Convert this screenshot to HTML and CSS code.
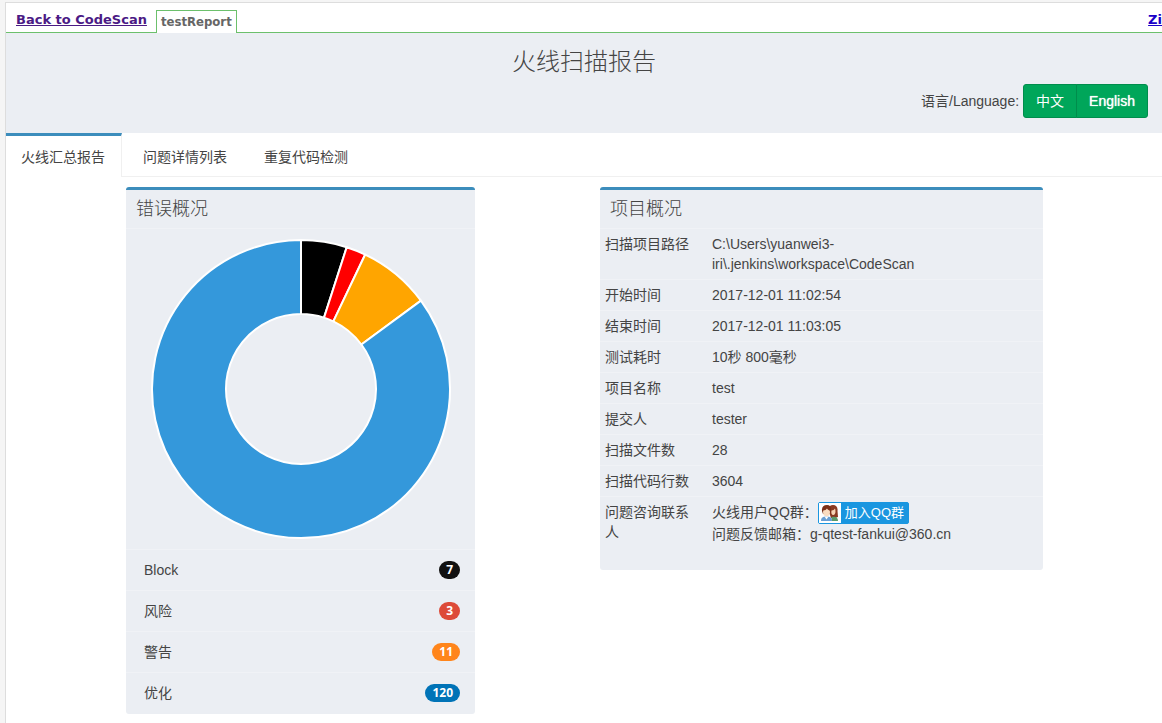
FILE: index.html
```html
<!DOCTYPE html>
<html lang="zh-CN">
<head>
<meta charset="utf-8">
<meta name="viewport" content="width=device-width, initial-scale=1">
<title>火线扫描报告</title>
<link rel="stylesheet" href="styles.css">
</head>
<body>
<div class="frame">
  <nav class="topbar">
    <a class="back" href="#back">Back to CodeScan</a>
    <span class="report-tab">testReport</span>
    <a class="zip" href="#zip">Zi</a>
  </nav>

  <header class="banner">
    <h1 class="title">火线扫描报告</h1>
    <div class="language">
      <span>语言/Language:</span>
      <div class="btn-group">
        <button class="btn" type="button">中文</button>
        <button class="btn btn-en" type="button">English</button>
      </div>
    </div>
  </header>

  <nav class="tabs">
    <a class="tab active" href="#summary">火线汇总报告</a>
    <a class="tab" href="#details">问题详情列表</a>
    <a class="tab" href="#duplicates">重复代码检测</a>
  </nav>

  <main class="content">
    <section class="box errors">
      <h2 class="box-title">错误概况</h2>
      <div class="chart">
        <svg class="donut" viewBox="0 0 302 302" role="img" aria-label="错误概况">
          <g transform="translate(151 151)" stroke="#fff" stroke-width="2" stroke-linejoin="round">
            <path fill="#000" d="M0-149A149 149 0 0 1 45.73-141.82L23.02-71.39A75 75 0 0 0 0-75Z"/>
            <path fill="#f00" d="M45.73-141.82A149 149 0 0 1 64.22-134.46L32.33-67.68A75 75 0 0 0 23.02-71.39Z"/>
            <path fill="#ffa500" d="M64.22-134.46A149 149 0 0 1 119.96-88.37L60.38-44.48A75 75 0 0 0 32.33-67.68Z"/>
            <path fill="#3498db" d="M119.96-88.37A149 149 0 1 1 0-149L0-75A75 75 0 1 0 60.38-44.48Z"/>
          </g>
        </svg>
      </div>
      <ul class="counts">
        <li><span>Block</span><span class="badge black">7</span></li>
        <li><span>风险</span><span class="badge red">3</span></li>
        <li><span>警告</span><span class="badge orange">11</span></li>
        <li><span>优化</span><span class="badge blue">120</span></li>
      </ul>
    </section>

    <section class="box project">
      <h2 class="box-title">项目概况</h2>
      <table class="info">
        <tbody>
          <tr><th scope="row">扫描项目路径</th><td>C:\Users\yuanwei3-<br>iri\.jenkins\workspace\CodeScan</td></tr>
          <tr><th scope="row">开始时间</th><td>2017-12-01 11:02:54</td></tr>
          <tr><th scope="row">结束时间</th><td>2017-12-01 11:03:05</td></tr>
          <tr><th scope="row">测试耗时</th><td>10秒 800毫秒</td></tr>
          <tr><th scope="row">项目名称</th><td>test</td></tr>
          <tr><th scope="row">提交人</th><td>tester</td></tr>
          <tr><th scope="row">扫描文件数</th><td>28</td></tr>
          <tr><th scope="row">扫描代码行数</th><td>3604</td></tr>
          <tr>
            <th scope="row">问题咨询联系人</th>
            <td>
              <div class="contact">
                <span>火线用户QQ群：</span>
                <a class="qq" href="#qq">
                  <svg class="qq-icon" viewBox="0 0 22 20" aria-hidden="true">
                    <path fill="#fff" d="M0 0h22v20H0z"/>
                    <path fill="#8a3a22" d="M10 9c-1-5 1-7 4-7s5 2 4.500 6l.5 6-3 1h-4z"/>
                    <path fill="#f8d3b4" d="M12.500 7.500c2 0 2.500-1 3.500-2 1 3 .5 6-1.500 6.500-2 0-2.500-2-2-4.500z"/>
                    <path fill="#5b9b6a" d="M12.500 14c4-1 6.500 0 6.500 4h-6.500z"/>
                    <path fill="#7b3018" d="M3 8c-.5-4 1.500-6 5-6s4.500 2.500 4 6l-1 3H4z"/>
                    <ellipse cx="7.500" cy="9" rx="3.500" ry="4.200" fill="#fbdcc0"/>
                    <path fill="#7b3018" d="M3.500 7.500c3 0 3.500-1 4.500-2 1 1.500 2 2 3.500 2L10.500 3.500H5z"/>
                    <path fill="#6a9fd4" d="M2 18c0-3.500 2-4.500 5.500-4.500s5.500 1 5.500 4.500z"/>
                    <path fill="#fff" d="M5.500 13.500l2 3 2-3z"/>
                  </svg>
                  <span class="qq-text">加入QQ群</span>
                </a>
              </div>
              <div>问题反馈邮箱：g-qtest-fankui@360.cn</div>
            </td>
          </tr>
        </tbody>
      </table>
    </section>
  </main>
</div>
</body>
</html>
```
FILE: styles.css
```css
* {
  box-sizing: border-box;
}

body {
  margin: 0;
  padding: 2px 0 0 5px;
  background: #f5f5f5;
  color: #444;
  font: 14px/20px "Liberation Sans", "Noto Sans CJK SC", sans-serif;
}

.frame {
  min-height: calc(100vh - 2px);
  border-top: 1px solid #ddd;
  border-left: 1px solid #ddd;
  background: #fff;
}

.topbar {
  display: flex;
  align-items: flex-end;
  height: 30px;
  padding-left: 10px;
  border-bottom: 1px solid #6cc06c;
  font: bold 13px/16px "DejaVu Sans", sans-serif;
}

.back {
  margin: 0 9px 4px 0;
  color: #4b1a85;
}

.report-tab {
  margin-bottom: -1px;
  padding: 2px 4px 3px;
  border: 1px solid #6cc06c;
  border-bottom: 0;
  background: #fff;
  color: #666;
  font-family: "DejaVu Sans Condensed", "DejaVu Sans", sans-serif;
  line-height: 17px;
}

.zip {
  margin: 0 0 4px auto;
  color: #1a00c8;
}

.banner {
  height: 100px;
  padding: 15px 14px 0;
  background: #ebeef3;
}

.title {
  margin: 0;
  font-size: 24px;
  font-weight: 300;
  line-height: 28px;
  text-align: center;
}

.language {
  display: flex;
  align-items: center;
  justify-content: flex-end;
  gap: 4px;
  margin-top: 8px;
}

.btn-group {
  display: flex;
}

.btn {
  height: 34px;
  padding: 0 12px;
  border: 1px solid #008d4c;
  border-radius: 3px 0 0 3px;
  background: #00a65a;
  color: #fff;
  font: inherit;
}

.btn-en {
  margin-left: -1px;
  border-radius: 0 3px 3px 0;
  text-shadow: 0 0 1px #fff;
}

.tabs {
  display: flex;
  gap: 5px;
  border-bottom: 1px solid #f0f0f0;
}

.tab {
  padding: 11px 16px 9px;
  border-top: 3px solid transparent;
  color: #444;
  text-decoration: none;
}

.tab.active {
  margin-bottom: -1px;
  padding-left: 15px;
  border-top-color: #3c8dbc;
  border-right: 1px solid #f0f0f0;
  background: #fff;
}

.content {
  display: grid;
  grid-template-columns: 120fr 349fr 125fr 443fr 119fr;
  align-items: start;
  padding: 10px 0 8px;
}

.errors {
  grid-column: 2;
}

.project {
  grid-column: 4;
}

.box {
  padding-bottom: 1px;
  border-top: 3px solid #3c8dbc;
  border-radius: 3px;
  background: #ebeef3;
}

.box-title {
  margin: 0;
  padding: 9px 10px;
  border-bottom: 1px solid #f0f2f6;
  font-size: 18px;
  font-weight: 300;
  line-height: 20px;
}

.chart {
  display: flex;
  justify-content: center;
  padding: 9px 10px;
}

.donut {
  width: 100%;
  max-width: 302px;
}

.counts {
  margin: 0;
  padding: 0;
  list-style: none;
}

.counts li {
  display: flex;
  align-items: center;
  justify-content: space-between;
  height: 41px;
  padding: 0 15px 0 18px;
  border-top: 1px solid #f0f2f6;
}

.badge {
  padding: 3px 7px;
  border-radius: 10px;
  color: #fff;
  font-family: "Open Sans", sans-serif;
  font-size: 12px;
  font-weight: bold;
  line-height: 12px;
}

.black { background: #111; }
.red { background: #dd4b39; }
.orange { background: #ff851b; }
.blue { background: #0073b7; }

.info {
  width: 100%;
  border-collapse: collapse;
  table-layout: fixed;
}

.info th,
.info td {
  padding: 5px;
  border-bottom: 1px solid #f0f2f6;
  font-weight: 400;
  text-align: left;
  vertical-align: top;
}

.info th {
  width: 107px;
}

.info tr:last-child > * {
  padding-bottom: 25px;
  border-bottom: 0;
}

.contact {
  display: flex;
}

.qq {
  display: flex;
  height: 22px;
  border: 1px solid #1a96e0;
  border-radius: 2px;
  background: #1a96e0;
  color: #fff;
  font-size: 13px;
  text-decoration: none;
}

.qq-icon {
  width: 22px;
  height: 20px;
}

.qq-text {
  padding: 0 4px;
}
```
